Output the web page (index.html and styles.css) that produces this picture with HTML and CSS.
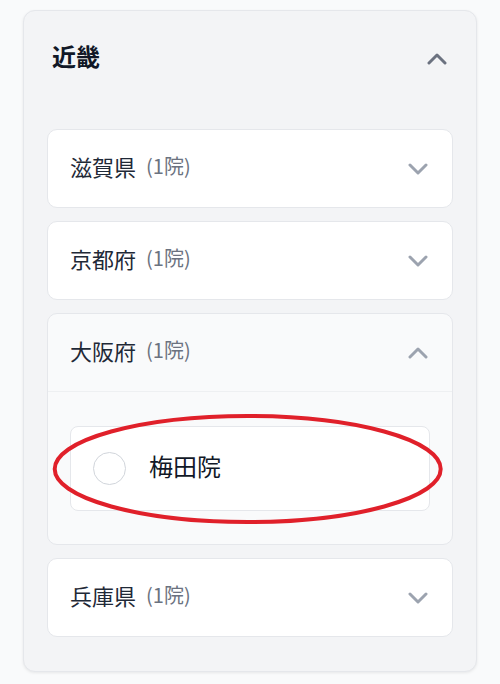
FILE: index.html
```html
<!DOCTYPE html>
<html lang="ja">
  <head>
    <meta charset="UTF-8" />
    <meta name="viewport" content="width=device-width, initial-scale=1.0" />
    <title>近畿</title>
    <link rel="stylesheet" href="styles.css">
  </head>
  <body>
    <section class="region">
      <header class="region-head">
        <h2 class="region-title">近畿</h2>
        <svg class="chev chev-dark" viewBox="0 0 20 12"><path d="M2 10 L10 2 L18 10" /></svg>
      </header>
      <div class="pref-list">
        <div class="pref">
          <div class="pref-head">
            <span class="pref-name">滋賀県</span><span class="pref-count">(1院)</span>
            <svg class="chev" viewBox="0 0 20 12"><path d="M2 2 L10 10 L18 2" /></svg>
          </div>
        </div>
        <div class="pref">
          <div class="pref-head">
            <span class="pref-name">京都府</span><span class="pref-count">(1院)</span>
            <svg class="chev" viewBox="0 0 20 12"><path d="M2 2 L10 10 L18 2" /></svg>
          </div>
        </div>
        <div class="pref open">
          <div class="pref-head">
            <span class="pref-name">大阪府</span><span class="pref-count">(1院)</span>
            <svg class="chev" viewBox="0 0 20 12"><path d="M2 10 L10 2 L18 10" /></svg>
          </div>
          <div class="pref-body">
            <label class="clinic">
              <span class="radio"></span>
              <span class="clinic-name">梅田院</span>
              <svg class="mark" viewBox="0 0 394 114"><ellipse cx="196.7" cy="57" rx="193" ry="53" /></svg>
            </label>
          </div>
        </div>
        <div class="pref">
          <div class="pref-head">
            <span class="pref-name">兵庫県</span><span class="pref-count">(1院)</span>
            <svg class="chev" viewBox="0 0 20 12"><path d="M2 2 L10 10 L18 2" /></svg>
          </div>
        </div>
      </div>
    </section>
  </body>
</html>
```

FILE: styles.css
```css
* {
  box-sizing: border-box;
  margin: 0;
  padding: 0;
}
body {
  background: #f9fafb;
  font-family: "Noto Sans CJK JP", "Noto Sans", sans-serif;
  color: #1f2937;
}
.region {
  margin: 10px 23px;
  background: #f3f4f6;
  border: 1px solid #e5e7eb;
  border-radius: 12px;
  box-shadow: 0 1px 3px rgba(0, 0, 0, 0.08);
  padding: 0 23px 34px;
}
.region-head {
  display: flex;
  align-items: center;
  justify-content: space-between;
  height: 95px;
  padding: 0 6px 0 5px;
}
.region-title {
  font-size: 24px;
  font-weight: bold;
  color: #111827;
  margin-bottom: 7px;
}
.chev {
  width: 20px;
  height: 12px;
  fill: none;
  stroke: #9ca3af;
  stroke-width: 3;
  stroke-linecap: round;
  stroke-linejoin: round;
}
.chev-dark {
  stroke: #6b7280;
}
.pref-list {
  display: flex;
  flex-direction: column;
  gap: 13px;
  padding-top: 23px;
}
.pref {
  background: #fff;
  border: 1px solid #e5e7eb;
  border-radius: 10px;
}
.pref-head {
  display: flex;
  align-items: center;
  height: 77px;
  padding: 0 24px 0 22px;
}
.pref-name {
  font-size: 22px;
  color: #1f2937;
  margin-bottom: 6px;
}
.pref-count {
  font-size: 20px;
  color: #6b7280;
  margin: 0 0 6px 10px;
}
.pref-head .chev {
  margin-left: auto;
}
.pref.open {
  background: #f9fafb;
}
.pref.open .pref-head {
  height: 78px;
  border-bottom: 1px solid #eef0f2;
}
.pref-body {
  padding: 34px 22px 33px;
}
.clinic {
  position: relative;
  display: flex;
  align-items: center;
  height: 85px;
  background: #fff;
  border: 1px solid #e5e7eb;
  border-radius: 8px;
  padding-left: 22px;
}
.radio {
  width: 33px;
  height: 33px;
  border: 1.5px solid #d1d5db;
  border-radius: 50%;
  background: #fff;
}
.clinic-name {
  font-size: 24px;
  color: #111827;
  margin: 0 0 6px 23px;
}
.mark {
  position: absolute;
  left: -20px;
  top: -15px;
  width: 394px;
  height: 114px;
  fill: none;
  stroke: #e0202a;
  stroke-width: 4;
}
```
